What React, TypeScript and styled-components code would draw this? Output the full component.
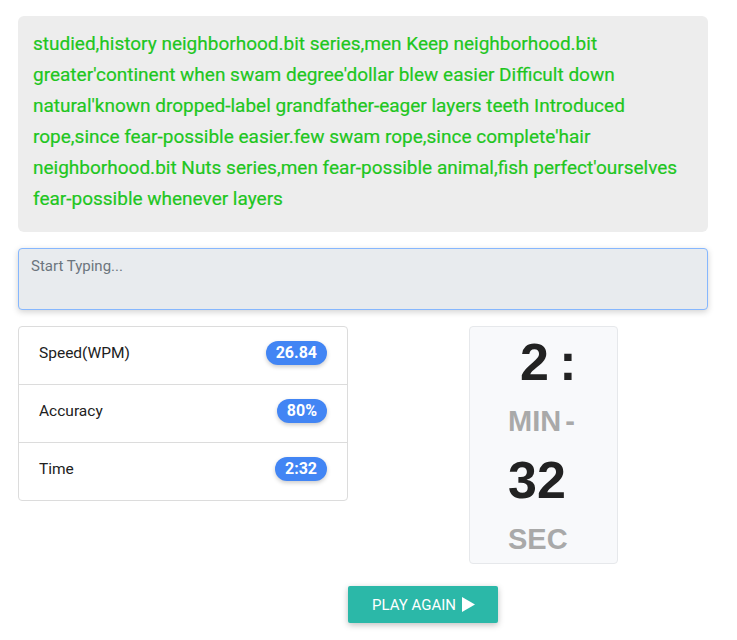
import React, { useState } from "react";
import styled, { createGlobalStyle } from "styled-components";

const GlobalStyle = createGlobalStyle`
  body {
    margin: 0;
    background: #ffffff;
    font-family: Roboto, "Liberation Sans", sans-serif;
  }
  * {
    box-sizing: border-box;
  }
`;

const Page = styled.div`
  width: 737px;
  padding: 16px 29px 16px 18px;
`;

const Passage = styled.div`
  background: #ededed;
  border-radius: 6px;
  padding: 12px 25px 18px 15px;
  color: #1ec61e;
  font-size: 19px;
  line-height: 31px;
  -webkit-text-stroke: 0.2px #1ec61e;
`;

const TypingArea = styled.textarea`
  display: block;
  width: 100%;
  height: 62px;
  margin-top: 16px;
  padding: 8px 12px;
  resize: none;
  background: #e8ebee;
  border: 1px solid #86b7fe;
  border-radius: 4px;
  box-shadow: 0 2px 6px rgba(0, 0, 0, 0.18);
  font-family: Roboto, "Liberation Sans", sans-serif;
  font-size: 15px;
  outline: none;

  &::placeholder {
    color: #6c757d;
  }
`;

const Results = styled.div`
  display: flex;
  align-items: flex-start;
  gap: 121px;
  margin-top: 16px;
`;

const StatList = styled.ul`
  list-style: none;
  margin: 0;
  padding: 0;
  width: 330px;
  border: 1px solid #dcdcdc;
  border-radius: 4px;
`;

const StatRow = styled.li`
  display: flex;
  align-items: center;
  justify-content: space-between;
  height: 57px;
  padding: 0 20px 6px;
  font-size: 15.5px;
  color: #212121;

  & + & {
    height: 58px;
    border-top: 1px solid #dcdcdc;
  }
`;

const Badge = styled.span`
  background: #4285f4;
  color: #ffffff;
  font-weight: 700;
  font-size: 16px;
  line-height: 24px;
  padding: 0 10px;
  border-radius: 12px;
  box-shadow: 0 2px 4px rgba(0, 0, 0, 0.2);
`;

const TimerCard = styled.div`
  width: 149px;
  height: 238px;
  padding: 6px 0 0 38px;
  background: #f8f9fb;
  border: 1px solid #e6e8eb;
  border-radius: 4px;
  font-family: "Liberation Sans", Arial, sans-serif;
  font-weight: 700;
`;

const TimerLine = styled.div<{ $big?: boolean; $indent?: number }>`
  height: 59px;
  line-height: 59px;
  white-space: nowrap;
  word-spacing: -4px;
  padding-left: ${(p) => p.$indent ?? 0}px;
  font-size: ${(p) => (p.$big ? "52px" : "29px")};
  color: ${(p) => (p.$big ? "#222222" : "#a9a9a9")};
`;

const Footer = styled.div`
  padding-left: 330px;
  margin-top: 22px;
`;

const PlayButton = styled.button`
  display: inline-flex;
  align-items: center;
  gap: 5px;
  height: 37px;
  padding: 0 23px 0 24px;
  background: #2bb8a8;
  color: #ffffff;
  border: none;
  border-radius: 2px;
  box-shadow: 0 2px 6px rgba(0, 0, 0, 0.25);
  font-family: Roboto, "Liberation Sans", sans-serif;
  font-size: 15px;
  text-transform: uppercase;
  cursor: pointer;
`;

const passage =
  "studied,history neighborhood.bit series,men Keep neighborhood.bit greater'continent when swam degree'dollar blew easier Difficult down natural'known dropped-label grandfather-eager layers teeth Introduced rope,since fear-possible easier.few swam rope,since complete'hair neighborhood.bit Nuts series,men fear-possible animal,fish perfect'ourselves fear-possible whenever layers";

const stats = [
  { label: "Speed(WPM)", value: "26.84" },
  { label: "Accuracy", value: "80%" },
  { label: "Time", value: "2:32" },
];

const App = () => {
  const [typed, setTyped] = useState<string>("");

  return (
    <Page>
      <GlobalStyle />
      <Passage>{passage}</Passage>
      <TypingArea
        placeholder="Start Typing..."
        value={typed}
        onChange={(e) => setTyped(e.target.value)}
      />
      <Results>
        <StatList>
          {stats.map((s) => (
            <StatRow key={s.label}>
              <span>{s.label}</span>
              <Badge>{s.value}</Badge>
            </StatRow>
          ))}
        </StatList>
        <TimerCard>
          <TimerLine $big $indent={12}>2 :</TimerLine>
          <TimerLine>MIN -</TimerLine>
          <TimerLine $big>32</TimerLine>
          <TimerLine>SEC</TimerLine>
        </TimerCard>
      </Results>
      <Footer>
        <PlayButton>
          Play Again
          <svg width="14" height="15" viewBox="0 0 14 15">
            <path d="M1 0 L14 7.5 L1 15 Z" fill="#ffffff" />
          </svg>
        </PlayButton>
      </Footer>
    </Page>
  );
};

export default App;
